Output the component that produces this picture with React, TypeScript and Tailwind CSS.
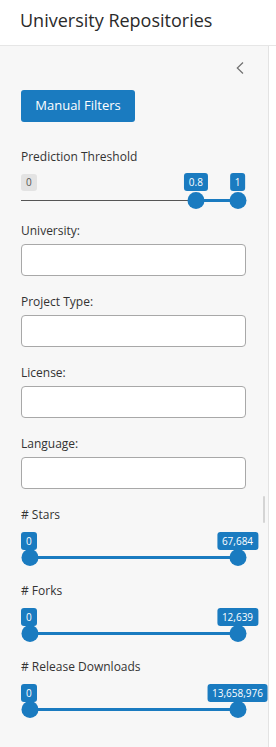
import React from "react";

function Badge({ text, grey }: { text: string; grey?: boolean }) {
  return (
    <span
      className={
        grey
          ? "inline-block h-[17px] rounded-[3px] bg-[#e3e3e3] px-[5px] text-[10px] leading-[17px] text-[#555]"
          : "inline-block h-[18px] rounded-[3px] bg-[#1a7bc0] px-[5px] text-[10px] leading-[18px] text-white"
      }
    >
      {text}
    </span>
  );
}

function RangeSlider({
  label,
  lo,
  hi,
  fLo,
  fHi,
  minGrey,
}: {
  label: string;
  lo: string;
  hi: string;
  fLo: number;
  fHi: number;
  minGrey?: boolean;
}) {
  const W = 225;
  const R = 8.5;
  const span = W - 2 * R;
  const cLo = R + fLo * span;
  const cHi = R + fHi * span;
  const loAtStart = fLo === 0;
  return (
    <div className="flex flex-col">
      <div className="text-[12px] leading-[17px] text-[#333]">{label}</div>
      <div className={minGrey ? "relative mt-[3px] h-[41px] w-[225px]" : "relative mt-[4px] h-[40px] w-[225px]"}>
        {minGrey ? (
          <div className="absolute left-0 top-0">
            <Badge text="0" grey />
          </div>
        ) : null}
        {loAtStart ? (
          <div className="absolute left-0 top-0 whitespace-nowrap">
            <Badge text={lo} />
          </div>
        ) : (
          <div
            className="absolute top-0 -translate-x-1/2 whitespace-nowrap"
            style={{ left: cLo }}
          >
            <Badge text={lo} />
          </div>
        )}
        <div
          className="absolute top-0 -translate-x-1/2 whitespace-nowrap"
          style={{ left: cHi }}
        >
          <Badge text={hi} />
        </div>
        {minGrey ? (
          <div className="absolute left-0 top-[32px] h-px bg-[#555]" style={{ width: cLo }} />
        ) : null}
        <div
          className={minGrey ? "absolute top-[31px] h-[3px] bg-[#1a7bc0]" : "absolute top-[29px] h-[3px] bg-[#1a7bc0]"}
          style={{ left: cLo, width: cHi - cLo }}
        />
        <div
          className={
            minGrey
              ? "absolute top-[24px] h-[17px] w-[17px] -translate-x-1/2 rounded-full bg-[#1a7bc0]"
              : "absolute top-[22px] h-[17px] w-[17px] -translate-x-1/2 rounded-full bg-[#1a7bc0]"
          }
          style={{ left: cLo }}
        />
        <div
          className={
            minGrey
              ? "absolute top-[24px] h-[17px] w-[17px] -translate-x-1/2 rounded-full bg-[#1a7bc0]"
              : "absolute top-[22px] h-[17px] w-[17px] -translate-x-1/2 rounded-full bg-[#1a7bc0]"
          }
          style={{ left: cHi }}
        />
      </div>
    </div>
  );
}

function TextField({ label }: { label: string }) {
  return (
    <div className="flex flex-col">
      <div className="text-[12px] leading-[17px] text-[#333]">{label}</div>
      <input
        type="text"
        className="mt-[5px] h-[32px] w-[225px] rounded-[4px] border border-[#a8a8a8] bg-white px-2 text-[12px] outline-none"
      />
    </div>
  );
}

export default function App() {
  return (
    <div
      className="flex h-[747px] w-[276px] flex-col bg-white"
      style={{ fontFamily: '"Open Sans", sans-serif' }}
    >
      <div className="h-[46px] shrink-0 border-b border-[#e6e6e6] pl-[20px] pt-[8px] text-[18px] leading-[24px] text-[#2a2a2a]">
        University Repositories
      </div>
      <div className="flex flex-1">
        <div className="relative flex w-[269px] flex-col border-r border-[#e3e3e3] bg-[#f7f7f7] pl-[21px] pr-[22px]">
          <div className="flex justify-end pt-[16px] pr-[2px]">
            <svg width="8" height="12" viewBox="0 0 8 12">
              <path d="M7 0.5 L1.3 6 L7 11.5" fill="none" stroke="#707070" strokeWidth="1.2" />
            </svg>
          </div>
          <button className="mt-[16px] h-[32px] w-[114px] rounded-[3px] bg-[#1a7bc0] text-[13px] text-white">
            Manual Filters
          </button>
          <div className="mt-[26px]">
            <RangeSlider label="Prediction Threshold" lo="0.8" hi="1" fLo={0.8} fHi={1} minGrey />
          </div>
          <div className="mt-[13px] flex flex-col gap-[17px]">
            <TextField label="University:" />
            <TextField label="Project Type:" />
            <TextField label="License:" />
            <TextField label="Language:" />
          </div>
          <div className="mt-[17px] flex flex-col gap-[15px]">
            <RangeSlider label="# Stars" lo="0" hi="67,684" fLo={0} fHi={1} />
            <RangeSlider label="# Forks" lo="0" hi="12,639" fLo={0} fHi={1} />
            <RangeSlider label="# Release Downloads" lo="0" hi="13,658,976" fLo={0} fHi={1} />
          </div>
          <div className="absolute left-[263px] top-[450px] h-[27px] w-[1.5px] rounded-full bg-[#d4d4d4]" />
        </div>
      </div>
    </div>
  );
}
